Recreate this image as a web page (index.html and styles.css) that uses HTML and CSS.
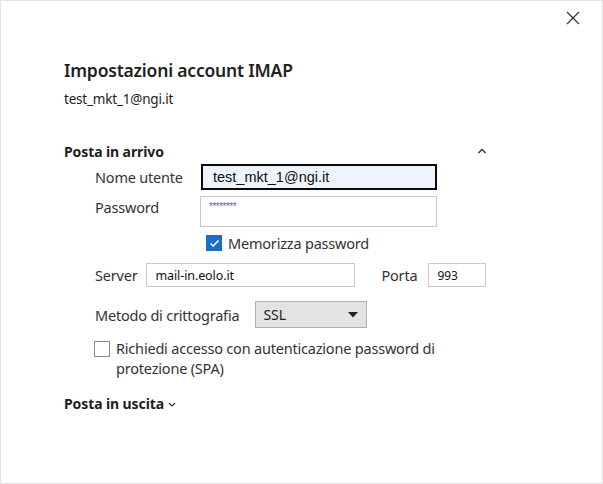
FILE: index.html
```html
<!DOCTYPE html>
<html lang="it">
<head>
<meta charset="utf-8">
<title>Impostazioni account IMAP</title>
<link rel="stylesheet" href="styles.css">
</head>
<body>
<div class="dialog">
  <div class="topbar">
    <button class="close" aria-label="Chiudi">
      <svg width="14" height="14" viewBox="0 0 14 14"><path d="M1 1 L13 13 M13 1 L1 13" stroke="#333" stroke-width="1.2" fill="none"/></svg>
    </button>
  </div>
  <div class="content">
    <h1 class="title">Impostazioni account IMAP</h1>
    <div class="account">test_mkt_1@ngi.it</div>

    <div class="section-head">
      <span class="section-title">Posta in arrivo</span>
      <svg class="chev-up" width="10" height="6" viewBox="0 0 10 6"><path d="M1.5 5 L5 1.5 L8.5 5" stroke="#333" stroke-width="1.4" fill="none"/></svg>
    </div>

    <div class="fields">
      <div class="row row-user">
        <label class="lbl lbl-wide">Nome utente</label>
        <div class="input input-focus">test_mkt_1@ngi.it</div>
      </div>
      <div class="row row-pass">
        <label class="lbl lbl-wide lbl-pass">Password</label>
        <div class="input input-pass"><span class="stars">********</span></div>
      </div>
      <div class="row row-remember">
        <span class="check checked">
          <svg width="11" height="9" viewBox="0 0 11 9"><path d="M1.5 4.5 L4.2 7 L9.5 1.5" stroke="#fff" stroke-width="1.6" fill="none"/></svg>
        </span>
        <span class="check-label">Memorizza password</span>
      </div>
      <div class="row row-server">
        <label class="lbl">Server</label>
        <div class="input input-server">mail-in.eolo.it</div>
        <label class="lbl lbl-porta">Porta</label>
        <div class="input input-port">993</div>
      </div>
      <div class="row row-crypt">
        <label class="lbl">Metodo di crittografia</label>
        <div class="select">
          <span>SSL</span>
          <svg width="10" height="6" viewBox="0 0 10 6"><path d="M0 0 H10 L5 5.5 Z" fill="#222"/></svg>
        </div>
      </div>
      <div class="row row-spa">
        <span class="check"></span>
        <span class="spa-label">Richiedi accesso con autenticazione password di protezione (SPA)</span>
      </div>
    </div>

    <div class="section-head out">
      <span class="section-title">Posta in uscita</span>
      <svg class="chev-down" width="8" height="5" viewBox="0 0 8 5"><path d="M1 1 L4 4 L7 1" stroke="#333" stroke-width="1.2" fill="none"/></svg>
    </div>
  </div>
</div>
</body>
</html>
```
FILE: styles.css
```css
* { box-sizing: border-box; }
html, body { margin: 0; padding: 0; background: #fff; }
body {
  font-family: "Noto Sans", "Open Sans", sans-serif;
  color: #262626;
}
.dialog {
  width: 603px;
  height: 484px;
  border: 1px solid #e3e3e3;
  background: #fff;
  position: relative;
}
.topbar {
  display: flex;
  justify-content: flex-end;
  height: 40px;
  padding: 10px 22px 0 0;
}
.close {
  border: 0;
  background: none;
  padding: 0;
  width: 14px;
  height: 14px;
  display: flex;
}
.content {
  padding: 17px 0 0 63px;
}
.title {
  margin: 0;
  font-size: 17.5px;
  font-weight: 600;
  line-height: 24px;
  color: #222;
  letter-spacing: -0.2px;
}
.account {
  margin-top: 8px;
  font-size: 13.5px;
  line-height: 18px;
  color: #222;
  letter-spacing: -0.2px;
}
.section-head {
  display: flex;
  align-items: center;
  margin-top: 33px;
  height: 20px;
  width: 423px;
}
.section-title {
  font-size: 14px;
  font-weight: 700;
  letter-spacing: -0.1px;
  color: #1e1e1e;
}
.chev-up { margin-left: auto; }
.fields {
  padding-left: 31px;
  margin-top: 3px;
}
.row {
  display: flex;
  align-items: center;
}
.lbl {
  font-size: 14.5px;
  color: #333;
  letter-spacing: -0.2px;
}
.lbl-wide { width: 106px; flex: none; }
.input {
  border: 1px solid #c8c8c8;
  background: #fff;
  font-family: "Liberation Sans", Arial, sans-serif;
  font-size: 14px;
  color: #111;
  display: flex;
  align-items: center;
}
.row-user { height: 26px; }
.input-focus {
  width: 236px;
  height: 26px;
  border: 2px solid #0a0a0a;
  background: #eef4fb;
  padding-left: 10px;
  font-size: 14.5px;
}
.row-pass { margin-top: 6px; height: 31px; align-items: flex-start; }
.lbl-pass { line-height: 20px; margin-top: 1px; }
.lbl-wide + .input-pass { margin-left: -1px; }
.input-pass {
  width: 237px;
  height: 31px;
  align-items: flex-start;
  padding: 5px 0 0 8px;
}
.stars {
  font-size: 10px;
  line-height: 10px;
  color: #5a6a90;
  letter-spacing: -0.5px;
}
.row-remember {
  margin-top: 8px;
  padding-left: 111px;
  height: 16px;
}
.check {
  width: 16px;
  height: 16px;
  border: 1px solid #8a8a8a;
  background: #fff;
  display: flex;
  align-items: center;
  justify-content: center;
  flex: none;
}
.check.checked {
  background: #1a70c8;
  border-color: #1a70c8;
}
.check-label {
  margin-left: 6px;
  font-size: 14.5px;
  color: #333;
  letter-spacing: -0.2px;
}
.row-server { margin-top: 12px; height: 24px; }
.input-server {
  margin-left: 9px;
  width: 209px;
  height: 24px;
  padding-left: 8px;
  font-family: "Noto Sans", sans-serif;
  font-size: 12.5px;
  letter-spacing: -0.1px;
}
.lbl-porta { margin-left: 26px; }
.input-port {
  margin-left: 11px;
  width: 58px;
  height: 24px;
  padding-left: 8px;
  font-family: "Noto Sans", sans-serif;
  font-size: 12px;
}
.row-crypt { margin-top: 14px; height: 27px; }
.select {
  margin-left: 16px;
  width: 112px;
  height: 27px;
  background: #e3e3e3;
  border: 1px solid #b0b0b0;
  display: flex;
  align-items: center;
  justify-content: space-between;
  padding: 0 8px 0 7px;
  font-size: 14px;
  color: #222;
}
.row-spa {
  margin-top: 13px;
  align-items: flex-start;
  margin-left: -1px;
}
.row-spa .check { margin-top: 0; }
.spa-label {
  margin-left: 6px;
  width: 340px;
  font-size: 14.5px;
  line-height: 20px;
  color: #333;
  letter-spacing: -0.2px;
  margin-top: -3px;
}
.section-head.out {
  margin-top: 15px;
}
.chev-down { margin-left: 4px; margin-top: 2px; }
```
